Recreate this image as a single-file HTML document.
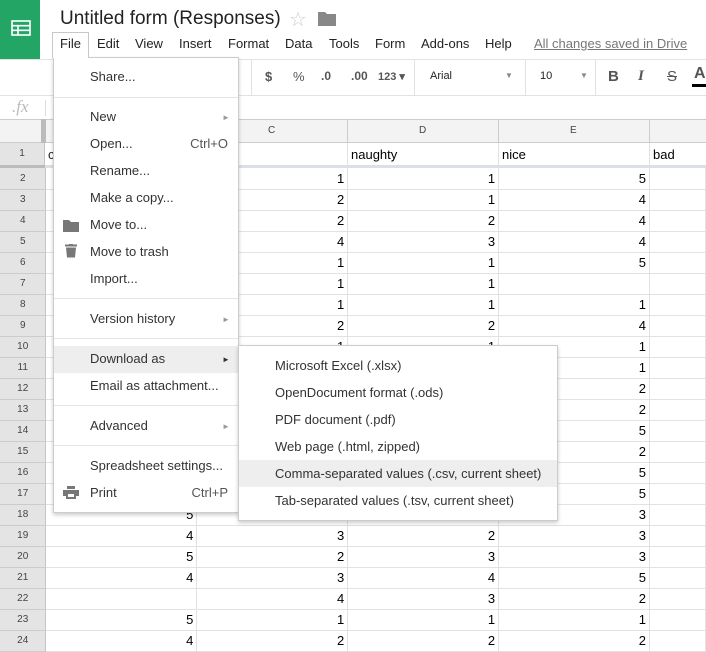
<!DOCTYPE html>
<html><head><meta charset="utf-8"><style>
*{box-sizing:border-box;margin:0;padding:0}
body{width:706px;height:645px;overflow:hidden;background:#fff;font-family:"Liberation Sans",Arial,sans-serif;position:relative;color:#222}
.a{position:absolute}
.menu span{position:absolute;font-size:13px}
#grid{position:absolute;left:0;top:168px;border-collapse:collapse;table-layout:fixed}
#grid td{height:21px;border-right:1px solid #e2e2e2;border-bottom:1px solid #e2e2e2;font-size:13px;text-align:right;padding-right:3px;color:#000}
#grid td.h{background:#e4e4e4;border-right:1px solid #c4c4c4;border-bottom:1px solid #ccc;text-align:center;font-size:10px;color:#444;padding:0}
.mi{position:absolute;left:36px;font-size:13px;color:#333}
.sc{position:absolute;right:10px;font-size:13px;color:#555}
.ar{position:absolute;left:168px;font-size:8px;color:#999}
.sep{position:absolute;left:0;right:0;height:1px;background:#e5e5e5}
.tb{position:absolute;font-size:13px;color:#555;font-weight:bold}
</style></head><body>
<div class="a" style="left:0;top:0;width:40px;height:59px;background:#23a566"></div>
<svg class="a" style="left:11px;top:20px" width="20" height="16" viewBox="0 0 20 16"><rect x="1" y="1" width="18" height="14" fill="none" stroke="#fff" stroke-width="1.6"/><path d="M1 5.7H19M1 10.3H19M7 5.7V15" stroke="#fff" stroke-width="1.6"/></svg>
<div class="a" style="left:60px;top:8px;font-size:19px;color:#222">Untitled form (Responses)</div>
<div class="a" style="left:289px;top:7px;font-size:20px;color:#ccc">☆</div>
<svg class="a" style="left:318px;top:11px" width="18" height="15"><path d="M0 1h7l2 2h9v12H0z" fill="#888"/></svg>
<div class="a" style="top:36px;left:0;font-size:13px;color:#222;width:706px;height:20px">
<span class="a" style="left:60px">File</span><span class="a" style="left:97px">Edit</span><span class="a" style="left:135px">View</span><span class="a" style="left:179px">Insert</span><span class="a" style="left:228px">Format</span><span class="a" style="left:285px">Data</span><span class="a" style="left:329px">Tools</span><span class="a" style="left:375px">Form</span><span class="a" style="left:421px">Add-ons</span><span class="a" style="left:485px">Help</span><span class="a" style="left:534px;color:#777;text-decoration:underline">All changes saved in Drive</span></div>
<div class="a" style="left:52px;top:32px;width:37px;height:26px;border:1px solid #c8c8c8;border-bottom:none;background:#fff;z-index:3"></div>
<div class="a" style="left:60px;top:36px;font-size:13px;z-index:4">File</div>
<!-- toolbar -->
<div class="a" style="left:0;top:59px;width:706px;height:37px;border-top:1px solid #e2e2e2;border-bottom:1px solid #e2e2e2"></div>
<div class="a" style="left:251px;top:60px;width:1px;height:35px;background:#e2e2e2"></div>
<div class="a" style="left:414px;top:60px;width:1px;height:35px;background:#e2e2e2"></div>
<div class="a" style="left:525px;top:60px;width:1px;height:35px;background:#e2e2e2"></div>
<div class="a" style="left:595px;top:60px;width:1px;height:35px;background:#e2e2e2"></div>
<span class="tb" style="left:265px;top:69px">$</span>
<span class="tb" style="left:293px;top:69px;font-weight:normal">%</span>
<span class="tb" style="left:321px;top:69px;font-size:12px">.0</span>
<span class="tb" style="left:351px;top:69px;font-size:12px">.00</span>
<span class="tb" style="left:378px;top:70px;font-size:11px">123 ▾</span>
<span class="tb" style="left:430px;top:70px;font-size:11px;color:#222;font-weight:normal">Arial</span>
<span class="a" style="left:505px;top:71px;font-size:8px;color:#888">▼</span>
<span class="tb" style="left:540px;top:70px;font-size:11px;color:#222;font-weight:normal">10</span>
<span class="a" style="left:580px;top:71px;font-size:8px;color:#888">▼</span>
<span class="tb" style="left:608px;top:68px;font-size:15px">B</span>
<span class="tb" style="left:638px;top:68px;font-size:15px;font-style:italic;font-family:'Liberation Serif'">I</span>
<span class="tb" style="left:667px;top:68px;font-size:15px;text-decoration:line-through;font-weight:normal">S</span>
<span class="tb" style="left:694px;top:65px;font-size:16px">A</span>
<div class="a" style="left:692px;top:84px;width:14px;height:3px;background:#000"></div>
<!-- formula bar -->
<div class="a" style="left:12px;top:97px;font-size:17px;font-style:italic;color:#bbb;font-family:'Liberation Serif'">.fx</div>
<div class="a" style="left:45px;top:100px;width:1px;height:16px;background:#ddd"></div>
<!-- column headers -->
<div class="a" style="left:0;top:119px;width:706px;height:24px;background:#f3f3f3;border-top:1px solid #ccc;border-bottom:1px solid #ccc"></div>
<div class="a" style="left:41px;top:119px;width:5px;height:24px;background:#bbb"></div>
<div class="a" style="left:196px;top:120px;width:1px;height:23px;background:#ccc"></div>
<div class="a" style="left:347px;top:120px;width:1px;height:23px;background:#ccc"></div>
<div class="a" style="left:498px;top:120px;width:1px;height:23px;background:#ccc"></div>
<div class="a" style="left:649px;top:120px;width:1px;height:23px;background:#ccc"></div>
<span class="a" style="left:268px;top:125px;font-size:10px;color:#444">C</span>
<span class="a" style="left:419px;top:125px;font-size:10px;color:#444">D</span>
<span class="a" style="left:570px;top:125px;font-size:10px;color:#444">E</span>
<!-- row 1 -->
<div class="a" style="left:0;top:143px;width:45px;height:22px;background:#e4e4e4;border-right:1px solid #c4c4c4;font-size:10px;text-align:center;line-height:22px;color:#444">1</div>
<div class="a" style="left:196px;top:143px;width:1px;height:22px;background:#e2e2e2"></div>
<div class="a" style="left:347px;top:143px;width:1px;height:22px;background:#e2e2e2"></div>
<div class="a" style="left:498px;top:143px;width:1px;height:22px;background:#e2e2e2"></div>
<div class="a" style="left:649px;top:143px;width:1px;height:22px;background:#e2e2e2"></div>
<span class="a" style="left:48px;top:147px;font-size:13px">c</span>
<span class="a" style="left:351px;top:147px;font-size:13px;color:#000">naughty</span>
<span class="a" style="left:502px;top:147px;font-size:13px;color:#000">nice</span>
<span class="a" style="left:653px;top:147px;font-size:13px;color:#000">bad</span>
<div class="a" style="left:0;top:165px;width:45px;height:3px;background:#bbb"></div>
<div class="a" style="left:45px;top:165px;width:661px;height:3px;background:#dbe0e6"></div>
<table id="grid">
<colgroup><col style="width:46px"><col style="width:151px"><col style="width:151px"><col style="width:151px"><col style="width:151px"><col style="width:56px"></colgroup>
<tr><td class="h">2</td><td></td><td>1</td><td>1</td><td>5</td><td></td></tr>
<tr><td class="h">3</td><td></td><td>2</td><td>1</td><td>4</td><td></td></tr>
<tr><td class="h">4</td><td></td><td>2</td><td>2</td><td>4</td><td></td></tr>
<tr><td class="h">5</td><td></td><td>4</td><td>3</td><td>4</td><td></td></tr>
<tr><td class="h">6</td><td></td><td>1</td><td>1</td><td>5</td><td></td></tr>
<tr><td class="h">7</td><td></td><td>1</td><td>1</td><td></td><td></td></tr>
<tr><td class="h">8</td><td></td><td>1</td><td>1</td><td>1</td><td></td></tr>
<tr><td class="h">9</td><td></td><td>2</td><td>2</td><td>4</td><td></td></tr>
<tr><td class="h">10</td><td></td><td>1</td><td>1</td><td>1</td><td></td></tr>
<tr><td class="h">11</td><td></td><td></td><td></td><td>1</td><td></td></tr>
<tr><td class="h">12</td><td></td><td></td><td></td><td>2</td><td></td></tr>
<tr><td class="h">13</td><td></td><td></td><td></td><td>2</td><td></td></tr>
<tr><td class="h">14</td><td></td><td></td><td></td><td>5</td><td></td></tr>
<tr><td class="h">15</td><td></td><td></td><td></td><td>2</td><td></td></tr>
<tr><td class="h">16</td><td></td><td></td><td></td><td>5</td><td></td></tr>
<tr><td class="h">17</td><td></td><td></td><td></td><td>5</td><td></td></tr>
<tr><td class="h">18</td><td>5</td><td></td><td></td><td>3</td><td></td></tr>
<tr><td class="h">19</td><td>4</td><td>3</td><td>2</td><td>3</td><td></td></tr>
<tr><td class="h">20</td><td>5</td><td>2</td><td>3</td><td>3</td><td></td></tr>
<tr><td class="h">21</td><td>4</td><td>3</td><td>4</td><td>5</td><td></td></tr>
<tr><td class="h">22</td><td></td><td>4</td><td>3</td><td>2</td><td></td></tr>
<tr><td class="h">23</td><td>5</td><td>1</td><td>1</td><td>1</td><td></td></tr>
<tr><td class="h">24</td><td>4</td><td>2</td><td>2</td><td>2</td><td></td></tr>
</table>
<!-- File menu -->
<div class="a" style="left:53px;top:57px;width:186px;height:456px;background:#fff;border:1px solid #ccc;box-shadow:0 2px 4px rgba(0,0,0,.2);z-index:2">
<div class="a" style="left:0;top:288px;width:184px;height:27px;background:#eee"></div>
<span class="mi" style="top:11px">Share...</span>
<div class="sep" style="top:39px"></div>
<span class="mi" style="top:51px">New</span><span class="ar" style="top:55px">►</span>
<span class="mi" style="top:78px">Open...</span><span class="sc" style="top:78px">Ctrl+O</span>
<span class="mi" style="top:105px">Rename...</span>
<span class="mi" style="top:132px">Make a copy...</span>
<svg class="a" style="left:9px;top:161px" width="16" height="13"><path d="M0 1h6l2 2h8v10H0z" fill="#777"/></svg>
<span class="mi" style="top:159px">Move to...</span>
<svg class="a" style="left:11px;top:186px" width="12" height="14"><path d="M0 1.5h12M4 0h4" stroke="#777" stroke-width="2"/><path d="M1 3.5h10l-1 10H2z" fill="#777"/></svg>
<span class="mi" style="top:186px">Move to trash</span>
<span class="mi" style="top:213px">Import...</span>
<div class="sep" style="top:240px"></div>
<span class="mi" style="top:253px">Version history</span><span class="ar" style="top:257px">►</span>
<div class="sep" style="top:280px"></div>
<span class="mi" style="top:293px">Download as</span><span class="ar" style="top:297px;color:#333">►</span>
<span class="mi" style="top:320px">Email as attachment...</span>
<div class="sep" style="top:347px"></div>
<span class="mi" style="top:360px">Advanced</span><span class="ar" style="top:364px">►</span>
<div class="sep" style="top:387px"></div>
<span class="mi" style="top:400px">Spreadsheet settings...</span>
<svg class="a" style="left:9px;top:428px" width="16" height="13"><path d="M4 0h8v3H4z M0 4h16v6h-3v3H3v-3H0z" fill="#777"/><rect x="5" y="8" width="6" height="3" fill="#fff"/></svg>
<span class="mi" style="top:427px">Print</span><span class="sc" style="top:427px">Ctrl+P</span>
</div>
<!-- submenu -->
<div class="a" style="left:238px;top:345px;width:320px;height:176px;background:#fff;border:1px solid #ccc;box-shadow:0 2px 4px rgba(0,0,0,.2);z-index:2">
<div class="a" style="left:0;top:114px;width:318px;height:27px;background:#eee"></div>
<span class="mi" style="top:12px">Microsoft Excel (.xlsx)</span>
<span class="mi" style="top:39px">OpenDocument format (.ods)</span>
<span class="mi" style="top:66px">PDF document (.pdf)</span>
<span class="mi" style="top:93px">Web page (.html, zipped)</span>
<span class="mi" style="top:120px">Comma-separated values (.csv, current sheet)</span>
<span class="mi" style="top:147px">Tab-separated values (.tsv, current sheet)</span>
</div>
</body></html>
